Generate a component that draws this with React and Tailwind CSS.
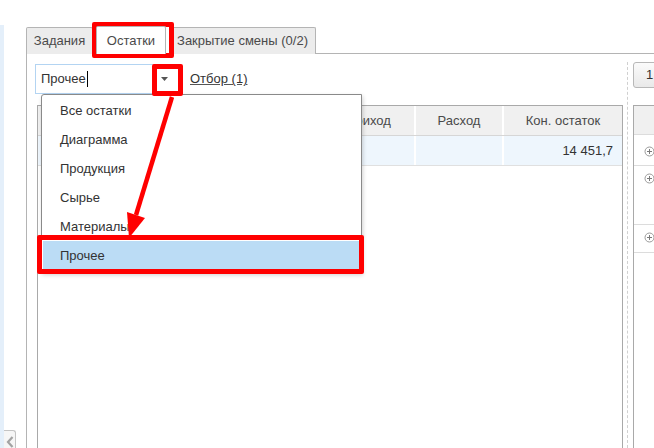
import React from "react";

function PlusCircle() {
  return (
    <svg width="11" height="11" viewBox="0 0 11 11" className="block">
      <circle cx="5.5" cy="5.5" r="4.5" fill="none" stroke="#9a9a9a" strokeWidth="1" />
      <path d="M3 5.5h5M5.5 3v5" stroke="#7a7a7a" strokeWidth="1" />
    </svg>
  );
}

export default function App() {
  const items = ["Все остатки", "Диаграмма", "Продукция", "Сырье", "Материалы", "Прочее"];
  return (
    <div className="relative w-[654px] h-[448px] overflow-hidden bg-white text-[13px] text-[#4a4a4a] font-['Liberation_Sans',Arial,sans-serif]">
      <div className="flex h-full">
        {/* left strip */}
        <div className="w-[26px] h-full pt-[25px] flex">
          <div className="w-[4px] h-full bg-[#e4effa]" />
          <div className="flex-1 flex flex-col justify-end">
            <div className="w-[12px] h-[18px] border border-l-0 border-b-0 border-[#c4c4c4] rounded-tr-[3px] bg-[#f6f6f6] flex items-start justify-center pt-[5px]">
              <svg width="8" height="12" viewBox="0 0 8 12">
                <path d="M6.5 1L2 6l4.5 5" fill="none" stroke="#a3a3a3" strokeWidth="2.2" />
              </svg>
            </div>
          </div>
        </div>

        {/* main */}
        <div className="flex-1 flex flex-col pt-[26px] min-w-0">
          {/* tabs */}
          <div className="flex items-end h-[28px] border-b border-[#b4b4b4]">
            <div className="w-[67px] h-[27px] -mb-px border border-b-0 border-[#b4b4b4] bg-[#ececec] flex items-center justify-center rounded-t-[2px]">
              Задания
            </div>
            <div className="ml-[3px] w-[70px] h-[28px] -mb-px border border-b-0 border-[#b4b4b4] bg-white flex items-center justify-center relative z-10 rounded-t-[2px]">
              Остатки
            </div>
            <div className="ml-[3px] w-[147px] h-[27px] -mb-px border border-b-0 border-[#b4b4b4] bg-[#ececec] flex items-center justify-center rounded-t-[2px]">
              Закрытие смены (0/2)
            </div>
          </div>

          {/* panel */}
          <div className="flex-1 flex border-l border-[#b4b4b4] min-h-0">
            {/* left column */}
            <div className="w-[598px] flex flex-col">
              <div className="mt-[10px] ml-[8px] flex items-center h-[30px]">
                <div className="w-[144px] h-[30px] border border-[#b3d4f2] bg-white flex items-center">
                  <span className="ml-[5px] text-[#333]">Прочее</span>
                  <span className="w-px h-[16px] bg-black ml-px" />
                  <span className="flex-1" />
                  <svg width="7" height="4" viewBox="0 0 7 4" className="mr-[10px]">
                    <path d="M0 0h7L3.5 4z" fill="#555" />
                  </svg>
                </div>
                <span className="ml-[11px] underline text-[#333] decoration-[#555]">Отбор (1)</span>
              </div>

              {/* left table */}
              <div className="mt-[11px] ml-[10px] w-[586px] flex-1 border border-b-0 border-[#a9a9a9] flex flex-col">
                <div className="flex h-[30px] bg-[#f0f0f0] border-b border-[#d6d6d6]">
                  <div className="w-[283px]" />
                  <div className="w-[93px] border-l-2 border-white flex items-center justify-center">Приход</div>
                  <div className="w-[88px] border-l-2 border-white flex items-center justify-center">Расход</div>
                  <div className="flex-1 border-l-2 border-white flex items-center justify-center">Кон. остаток</div>
                </div>
                <div className="flex h-[30px] bg-[#eef6fd] border-b border-[#e0e0e0]">
                  <div className="w-[283px]" />
                  <div className="w-[93px] border-l-2 border-white" />
                  <div className="w-[88px] border-l-2 border-white" />
                  <div className="flex-1 border-l-2 border-white flex items-center justify-end pr-[9px] text-[#333]">14 451,7</div>
                </div>
              </div>
            </div>

            {/* splitter */}
            <div className="w-[8px] pt-[8px] flex">
              <div className="ml-[2px] h-full border-l border-dashed border-[#d0d0d0]" />
            </div>

            {/* right column */}
            <div className="flex-1 flex flex-col min-w-0">
              <div className="mt-[8px] h-[26px] w-[40px] border border-[#b8b8b8] rounded-[3px] bg-gradient-to-b from-[#fbfbfb] to-[#e9e9e9] flex items-center pl-[12px] text-[#333]">
                1
              </div>
              <div className="mt-[17px] flex-1 border-l border-t border-[#a9a9a9] flex flex-col">
                <div className="h-[29px] bg-[#f0f0f0] border-b border-[#dcdcdc]" />
                <div className="h-[31px] border-b border-[#dcdcdc] pl-[10px] pt-[11px]"><PlusCircle /></div>
                <div className="h-[59px] border-b border-[#dcdcdc] pl-[10px] pt-[7px]"><PlusCircle /></div>
                <div className="h-[28px] border-b border-[#dcdcdc] pl-[10px] pt-[7px]"><PlusCircle /></div>
              </div>
            </div>
          </div>
        </div>
      </div>

      {/* dropdown popup */}
      <div className="absolute left-[41px] top-[94px] w-[321px] h-[179px] border border-[#8a8a8a] bg-white rounded-tl-[3px] shadow-[1px_2px_4px_rgba(0,0,0,0.18)] p-px">
        {items.map((t, i) => (
          <div
            key={t}
            className={
              "h-[29px] flex items-center pl-[17px] text-[#333] " +
              (i === 5 ? "bg-[#bbdcf5]" : "")
            }
          >
            {t}
          </div>
        ))}
      </div>

      {/* annotations */}
      <div className="absolute left-[92px] top-[22px] w-[82px] h-[36px] border-[5px] border-[#ff0000] rounded-[2px] pointer-events-none" />
      <div className="absolute left-[152px] top-[64px] w-[31px] h-[32px] border-[5px] border-[#ff0000] rounded-[2px] pointer-events-none" />
      <div className="absolute left-[37px] top-[235px] w-[327px] h-[39px] border-[5px] border-[#ff0000] rounded-[2px] pointer-events-none" />
      <svg className="absolute left-0 top-0 pointer-events-none" width="654" height="448">
        <line x1="172" y1="97" x2="136" y2="215" stroke="#ff0000" strokeWidth="4.5" />
        <polygon points="129,238 127,212 145,218" fill="#ff0000" />
      </svg>
    </div>
  );
}
